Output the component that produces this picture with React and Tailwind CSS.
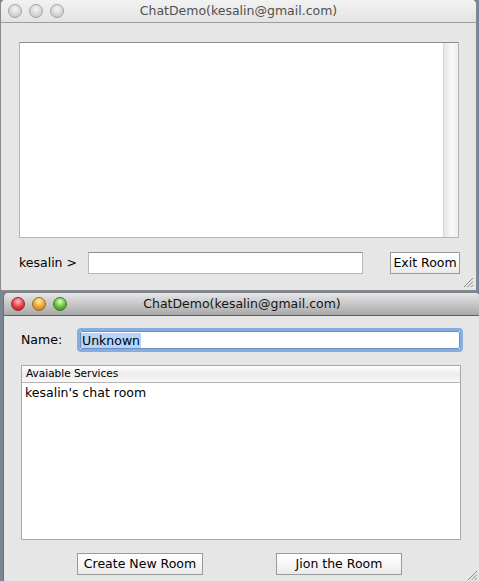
import React from 'react';

const font = "font-['DejaVu_Sans',sans-serif]";

const Light = ({ color }) => {
  const tones = {
    gray: 'bg-[radial-gradient(circle_at_50%_35%,#f4f4f4,#d4d4d4_60%,#b9b9b9)] border-[#a3a3a3]',
    red: 'bg-[radial-gradient(circle_at_50%_30%,#ffc4c4,#e8424a_50%,#a3141c)] border-[#8e2a2e]',
    yellow: 'bg-[radial-gradient(circle_at_50%_30%,#fff0b8,#f0a830_50%,#b66a10)] border-[#9a6a22]',
    green: 'bg-[radial-gradient(circle_at_50%_30%,#e0ffc8,#6cc040_50%,#357a18)] border-[#3f7a2a]',
  };
  return <div className={`w-[14px] h-[14px] rounded-full border ${tones[color]}`} />;
};

const TitleBar = ({ active }) => (
  <div
    className={`relative h-[23px] flex items-center justify-center border-b ${
      active
        ? 'bg-gradient-to-b from-[#e6e6e6] to-[#a9a9a9] border-[#5e5e5e] text-[#141414]'
        : 'bg-gradient-to-b from-[#f2f2f2] to-[#e3e3e3] border-[#9c9c9c] text-[#505050]'
    }`}
  >
    <div className="absolute left-[7px] top-[4px] flex gap-[7px]">
      <Light color={active ? 'red' : 'gray'} />
      <Light color={active ? 'yellow' : 'gray'} />
      <Light color={active ? 'green' : 'gray'} />
    </div>
    <span className="text-[12.5px] leading-none">ChatDemo(kesalin@gmail.com)</span>
  </div>
);

const Grip = () => (
  <svg width="11" height="11" viewBox="0 0 11 11" className="absolute right-[2px] bottom-[2px]">
    <path d="M1 10 L10 1 M4.5 10 L10 4.5 M8 10 L10 8" stroke="#8c8c8c" strokeWidth="1" />
  </svg>
);

const MacButton = ({ children, className = '' }) => (
  <div
    className={`h-[22px] flex items-center justify-center border border-[#9a9a9a] bg-gradient-to-b from-[#ffffff] via-[#f7f7f7] to-[#eaeaea] text-[12.5px] text-black ${className}`}
  >
    {children}
  </div>
);

const ChatWindow = () => (
  <div className="absolute left-0 top-0 w-[477px] h-[291px] rounded-t-[5px] overflow-hidden border-x border-b border-[#8a8a8a] bg-[#e6e6e6] flex flex-col">
    <TitleBar />
    <div className="relative flex-1 pl-[18px] pt-[19px]">
      <div className="w-[440px] h-[196px] flex bg-white border border-[#b5b5b5] border-t-[#8e8e8e]">
        <div className="flex-1" />
        <div className="w-[15px] bg-gradient-to-r from-[#e4e4e4] via-[#f9f9f9] to-[#eeeeee] border-l border-[#d8d8d8]" />
      </div>
      <div className="mt-[14px] flex items-center h-[22px]">
        <span className="w-[69px] text-[12.5px] text-black">kesalin &gt;</span>
        <div className="w-[275px] h-[22px] bg-white border border-[#b8b8b8] border-t-[#8e8e8e]" />
        <MacButton className="ml-[27px] w-[70px]">Exit Room</MacButton>
      </div>
      <Grip />
    </div>
  </div>
);

const ServiceWindow = () => (
  <div className="absolute left-[3px] top-[293px] w-[477px] h-[290px] rounded-t-[5px] overflow-hidden border-l border-[#6e6e6e] bg-[#e6e6e6] flex flex-col">
    <TitleBar active />
    <div className="relative flex-1 pl-[17px] pt-[12px]">
      <div className="flex items-center h-[24px]">
        <span className="w-[56px] text-[12.5px] text-black">Name:</span>
        <div className="w-[386px] h-[24px] rounded-[4px] border-[3px] border-[#86ade0] bg-white flex items-center">
          <div className="h-full w-full border border-[#6d8fbf] rounded-[2px] flex items-center">
            <span className="bg-[#b4d4fd] text-[12.5px] leading-[15px] text-black px-[1px]">Unknown</span>
          </div>
        </div>
      </div>
      <div className="mt-[13px] w-[440px] h-[175px] flex flex-col bg-white border border-[#a9a9a9]">
        <div className="h-[17px] flex items-center pl-[4px] border-b border-[#b4b4b4] bg-gradient-to-b from-[#ffffff] via-[#ececec] to-[#f8f8f8] text-[10.5px] text-black">
          Avaiable Services
        </div>
        <div className="pl-[3px] pt-[1px] text-[12.5px] text-black leading-[17px]">kesalin's chat room</div>
      </div>
      <div className="mt-[13px] flex">
        <MacButton className="ml-[56px] w-[126px]">Create New Room</MacButton>
        <MacButton className="ml-[73px] w-[126px]">Jion the Room</MacButton>
      </div>
      <Grip />
    </div>
  </div>
);

export default function App() {
  return (
    <div className={`relative w-[479px] h-[581px] overflow-hidden bg-[#7b8592] ${font}`}>
      <div className="absolute left-[477px] top-0 w-[2px] h-[291px] bg-[#6f86a6]" />
      <ChatWindow />
      <ServiceWindow />
    </div>
  );
}
